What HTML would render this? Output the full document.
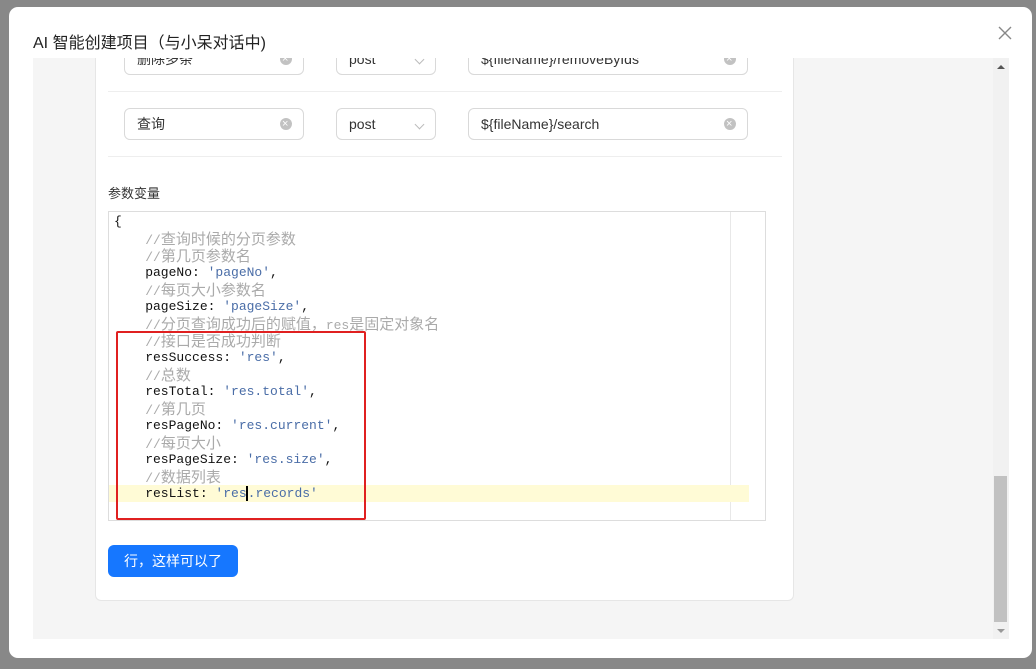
<!DOCTYPE html>
<html><head><meta charset="utf-8"><style>
*{box-sizing:border-box;margin:0;padding:0}
body{width:1036px;height:669px;overflow:hidden;background:#888;font-family:"Liberation Sans","Noto Sans CJK SC",sans-serif;position:relative}
.dlg{position:absolute;left:9px;top:7px;width:1023px;height:651px;background:#fff;border-radius:9px}
.title{position:absolute;left:33px;top:29px;font-size:16px;color:#222}
.close{position:absolute;left:997px;top:25px;width:16px;height:16px}
.area{position:absolute;left:33px;top:58px;width:976px;height:581px;background:#f5f5f5;overflow:hidden}
.card{position:absolute;left:62px;top:-20px;width:699px;height:563px;background:#fff;border:1px solid #e6e6e6;border-radius:6px}
.inp{position:absolute;height:32px;border:1px solid #d9d9d9;border-radius:6px;background:#fff;font-size:14px;color:#333;padding:0 12px;line-height:30px}
.x{position:absolute;right:11px;top:9px;width:12px;height:12px;border-radius:50%;background:#c2c2c2}
.x:after{content:"×";position:absolute;left:2px;top:-9px;color:#fff;font-size:11px}
.chev{position:absolute;right:12px;top:12px;width:7px;height:7px;border-right:1px solid #bbb;border-bottom:1px solid #bbb;transform:rotate(45deg)}
.sep{position:absolute;left:75px;width:674px;height:1px;background:#eee}
.code{position:absolute;left:108px;top:211px;width:658px;height:310px;border:1px solid #ddd;background:#fff;font-family:"Liberation Mono","Noto Sans CJK SC",monospace;font-size:13px;}
.ln{position:absolute;left:5px;height:17px;line-height:17px;white-space:pre;color:#111}
.c{color:#aaa}.s{color:#4a6da7}
.k{font-size:15px;font-weight:normal;font-family:"Noto Sans CJK SC",sans-serif;line-height:17px}
.btn{position:absolute;left:108px;top:545px;width:130px;height:32px;background:#1677ff;color:#fff;border-radius:6px;font-size:14px;text-align:center;line-height:32px}
</style></head><body>
<div class="dlg"></div>
<div class="title">AI 智能创建项目（与小呆对话中)</div>
<svg class="close" viewBox="0 0 16 16"><path d="M2 2L14 14M14 2L2 14" stroke="#888" stroke-width="1.4"/></svg>
<div class="area">
<div class="card"></div>
<div class="inp" style="left:91px;top:-15px;width:180px">删除多条<span class="x"></span></div>
<div class="inp" style="left:303px;top:-15px;width:100px">post<span class="chev"></span></div>
<div class="inp" style="left:435px;top:-15px;width:280px">${fileName}/removeByIds<span class="x"></span></div>
<div class="sep" style="top:33px"></div>
<div class="inp" style="left:91px;top:50px;width:180px">查询<span class="x"></span></div>
<div class="inp" style="left:303px;top:50px;width:100px">post<span class="chev"></span></div>
<div class="inp" style="left:435px;top:50px;width:280px">${fileName}/search<span class="x"></span></div>
<div class="sep" style="top:98px"></div>
<div style="position:absolute;left:75px;top:125px;font-size:13px;color:#333">参数变量</div>
<div style="position:absolute;left:960px;top:0;width:16px;height:581px;background:#f1f1f1"></div>
<div style="position:absolute;left:961px;top:418px;width:13px;height:146px;background:#c1c1c1"></div>
<div style="position:absolute;left:964px;top:7px;border-left:4px solid transparent;border-right:4px solid transparent;border-bottom:4px solid #555"></div>
<div style="position:absolute;left:964px;top:571px;border-left:4px solid transparent;border-right:4px solid transparent;border-top:4px solid #999"></div>
</div>
<div class="code">
<div style="position:absolute;left:621px;top:0;width:1px;height:308px;background:#e8e8e8"></div>
<div style="position:absolute;left:0;top:273px;width:640px;height:17px;background:#fffbd6"></div>
<div class="ln" style="top:1px">{</div>
<div class="ln c" style="top:18px">    //<b class="k">查询时候的分页参数</b></div>
<div class="ln c" style="top:35px">    //<b class="k">第几页参数名</b></div>
<div class="ln" style="top:52px">    pageNo: <span class="s">'pageNo'</span>,</div>
<div class="ln c" style="top:69px">    //<b class="k">每页大小参数名</b></div>
<div class="ln" style="top:86px">    pageSize: <span class="s">'pageSize'</span>,</div>
<div class="ln c" style="top:103px">    //<b class="k">分页查询成功后的赋值，</b>res<b class="k">是固定对象名</b></div>
<div class="ln c" style="top:120px">    //<b class="k">接口是否成功判断</b></div>
<div class="ln" style="top:137px">    resSuccess: <span class="s">'res'</span>,</div>
<div class="ln c" style="top:154px">    //<b class="k">总数</b></div>
<div class="ln" style="top:171px">    resTotal: <span class="s">'res.total'</span>,</div>
<div class="ln c" style="top:188px">    //<b class="k">第几页</b></div>
<div class="ln" style="top:205px">    resPageNo: <span class="s">'res.current'</span>,</div>
<div class="ln c" style="top:222px">    //<b class="k">每页大小</b></div>
<div class="ln" style="top:239px">    resPageSize: <span class="s">'res.size'</span>,</div>
<div class="ln c" style="top:256px">    //<b class="k">数据列表</b></div>
<div class="ln" style="top:273px">    resList: <span class="s">'res<span style="border-left:2px solid #000;margin-left:-1px"></span>.records'</span></div>
</div>
<div style="position:absolute;left:116px;top:331px;width:250px;height:189px;border:2px solid #e02020;border-radius:2px"></div>
<div class="btn">行，这样可以了</div>
</body></html>
